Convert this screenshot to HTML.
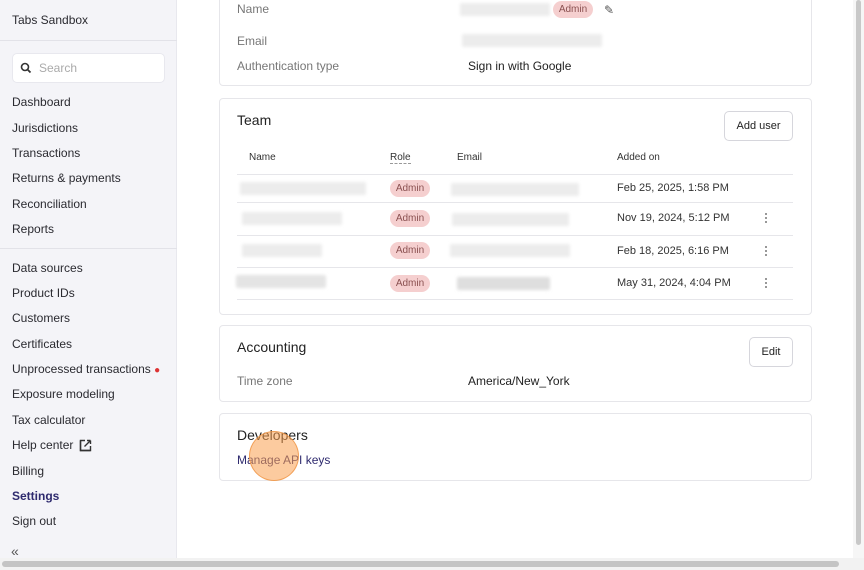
<!DOCTYPE html>
<html><head><style>
*{margin:0;padding:0;box-sizing:border-box}
body{width:864px;height:570px;overflow:hidden;background:#fff;font-family:"Liberation Sans",sans-serif;color:#222;position:relative}
.a{position:absolute}
.sb{left:0;top:0;width:177px;height:558px;background:#f4f4f8;border-right:1px solid #e8e8ee}
.nav{left:12px;font-size:12px;color:#2a2a30}
.card{position:absolute;left:219px;width:593px;border:1px solid #e6e6ea;border-radius:4px;background:#fff}
.lbl{font-size:12px;color:#777}
.val{font-size:12px;color:#222}
.blur{position:absolute;height:13px;background:#ececec;border-radius:2px;filter:blur(1.5px)}
.badge{position:absolute;left:390px;width:40px;height:17px;border-radius:9px;background:#f5cfcf;color:#8a5050;font-size:10px;text-align:center;line-height:17px}
.row{position:absolute;left:237px;width:556px;height:1px;background:#e6e6ea}
.date{position:absolute;left:617px;font-size:11px;color:#333}
.dots{position:absolute;left:765px;width:2px;font-size:0}
.dots i{display:block;width:2px;height:2px;background:#777;margin-bottom:2px;border-radius:1px}
.btn{position:absolute;border:1px solid #d6d6dc;border-radius:5px;font-size:11px;background:#fff;text-align:center;color:#222}
h3{position:absolute;font-weight:normal;font-size:14px;color:#222}
</style></head><body>
<div class="a sb"></div>
<div class="a nav" style="top:13px">Tabs Sandbox</div>
<div class="a" style="left:0;top:40px;width:177px;height:1px;background:#e2e2e8"></div>
<div class="a" style="left:12px;top:53px;width:153px;height:30px;background:#fff;border:1px solid #e8e8ee;border-radius:5px"></div>
<svg class="a" style="left:20px;top:62px" width="12" height="12" viewBox="0 0 12 12"><circle cx="5" cy="5" r="3.5" fill="none" stroke="#333" stroke-width="1.6"/><path d="M7.5 7.5L10.5 10.5" stroke="#333" stroke-width="1.8"/></svg>
<div class="a" style="left:39px;top:61px;font-size:12px;color:#aaa">Search</div>
<div class="a nav" style="top:95px">Dashboard</div>
<div class="a nav" style="top:121px">Jurisdictions</div>
<div class="a nav" style="top:146px">Transactions</div>
<div class="a nav" style="top:171px">Returns &amp; payments</div>
<div class="a nav" style="top:197px">Reconciliation</div>
<div class="a nav" style="top:222px">Reports</div>
<div class="a" style="left:0;top:248px;width:177px;height:1px;background:#e2e2e8"></div>
<div class="a nav" style="top:261px">Data sources</div>
<div class="a nav" style="top:286px">Product IDs</div>
<div class="a nav" style="top:311px">Customers</div>
<div class="a nav" style="top:337px">Certificates</div>
<div class="a nav" style="top:362px">Unprocessed transactions <span style="color:#d33;font-size:10px">●</span></div>
<div class="a nav" style="top:387px">Exposure modeling</div>
<div class="a nav" style="top:413px">Tax calculator</div>
<div class="a nav" style="top:438px">Help center</div>
<svg class="a" style="left:79px;top:439px" width="13" height="13" viewBox="0 0 13 13"><path d="M6 1.5H1.5V11.5H11.5V7" fill="none" stroke="#333" stroke-width="1.4"/><path d="M1.5 1.5V11.5H11.5" fill="none" stroke="#333" stroke-width="1.4"/><path d="M11.5 1.5V5M11.5 1.5H8M11.5 1.5L5.5 7.5" fill="none" stroke="#333" stroke-width="1.4"/></svg>
<div class="a nav" style="top:464px">Billing</div>
<div class="a nav" style="top:489px;font-weight:bold;color:#2e2a6e">Settings</div>
<div class="a nav" style="top:514px">Sign out</div>
<div class="a" style="left:11px;top:543px;font-size:14px;color:#555">«</div>

<div class="card" style="top:-5px;height:91px"></div>
<div class="a lbl" style="left:237px;top:2px">Name</div>
<div class="blur" style="left:460px;top:3px;width:90px"></div>
<div class="a" style="left:553px;top:1px;width:40px;height:17px;border-radius:9px;background:#f5cfcf;color:#8a5050;font-size:10px;text-align:center;line-height:17px">Admin</div>
<div class="a" style="left:604px;top:3px;font-size:12px;color:#555">✎</div>
<div class="a lbl" style="left:237px;top:34px">Email</div>
<div class="blur" style="left:462px;top:34px;width:140px"></div>
<div class="a lbl" style="left:237px;top:59px">Authentication type</div>
<div class="a val" style="left:468px;top:59px">Sign in with Google</div>

<div class="card" style="top:98px;height:217px"></div>
<h3 style="left:237px;top:112px">Team</h3>
<div class="btn" style="left:724px;top:111px;width:69px;height:30px;line-height:28px">Add user</div>
<div class="a" style="left:249px;top:152px;font-size:10px;color:#333">Name</div>
<div class="a" style="left:390px;top:152px;font-size:10px;color:#333;border-bottom:1px dashed #999">Role</div>
<div class="a" style="left:457px;top:152px;font-size:10px;color:#333">Email</div>
<div class="a" style="left:617px;top:152px;font-size:10px;color:#333">Added on</div>
<div class="row" style="top:174px"></div>
<div class="blur" style="left:240px;top:182px;width:126px"></div>
<div class="badge" style="top:180px">Admin</div>
<div class="blur" style="left:451px;top:183px;width:128px"></div>
<div class="date" style="top:182px">Feb 25, 2025, 1:58 PM</div>
<div class="row" style="top:202px"></div>
<div class="blur" style="left:242px;top:212px;width:100px"></div>
<div class="badge" style="top:210px">Admin</div>
<div class="blur" style="left:452px;top:213px;width:117px"></div>
<div class="date" style="top:212px">Nov 19, 2024, 5:12 PM</div>
<div class="dots" style="top:213px"><i></i><i></i><i></i></div>
<div class="row" style="top:235px"></div>
<div class="blur" style="left:242px;top:244px;width:80px"></div>
<div class="badge" style="top:242px">Admin</div>
<div class="blur" style="left:450px;top:244px;width:120px"></div>
<div class="date" style="top:245px">Feb 18, 2025, 6:16 PM</div>
<div class="dots" style="top:246px"><i></i><i></i><i></i></div>
<div class="row" style="top:267px"></div>
<div class="blur" style="left:236px;top:275px;width:90px;background:#e4e4e4"></div>
<div class="badge" style="top:275px">Admin</div>
<div class="blur" style="left:457px;top:277px;width:93px;background:#dedede"></div>
<div class="date" style="top:277px">May 31, 2024, 4:04 PM</div>
<div class="dots" style="top:278px"><i></i><i></i><i></i></div>
<div class="row" style="top:299px"></div>

<div class="card" style="top:325px;height:77px"></div>
<h3 style="left:237px;top:339px">Accounting</h3>
<div class="btn" style="left:749px;top:337px;width:44px;height:30px;line-height:28px">Edit</div>
<div class="a lbl" style="left:237px;top:374px">Time zone</div>
<div class="a val" style="left:468px;top:374px">America/New_York</div>

<div class="card" style="top:413px;height:68px"></div>
<h3 style="left:237px;top:427px">Developers</h3>
<div class="a" style="left:237px;top:453px;font-size:12px;color:#2e2a6e">Manage API keys</div>
<div class="a" style="left:249px;top:431px;width:50px;height:50px;border-radius:50%;background:rgba(250,160,80,0.55);border:1.5px solid rgba(240,150,70,0.8)"></div>

<div class="a" style="left:0;top:558px;width:864px;height:12px;background:#f2f2f2"></div>
<div class="a" style="left:2px;top:561px;width:837px;height:6px;border-radius:3px;background:#c4c4c4"></div>
<div class="a" style="left:853px;top:0;width:11px;height:558px;background:#f6f6f6"></div>
<div class="a" style="left:856px;top:0;width:5px;height:545px;border-radius:3px;background:#c8c8c8"></div>
</body></html>
